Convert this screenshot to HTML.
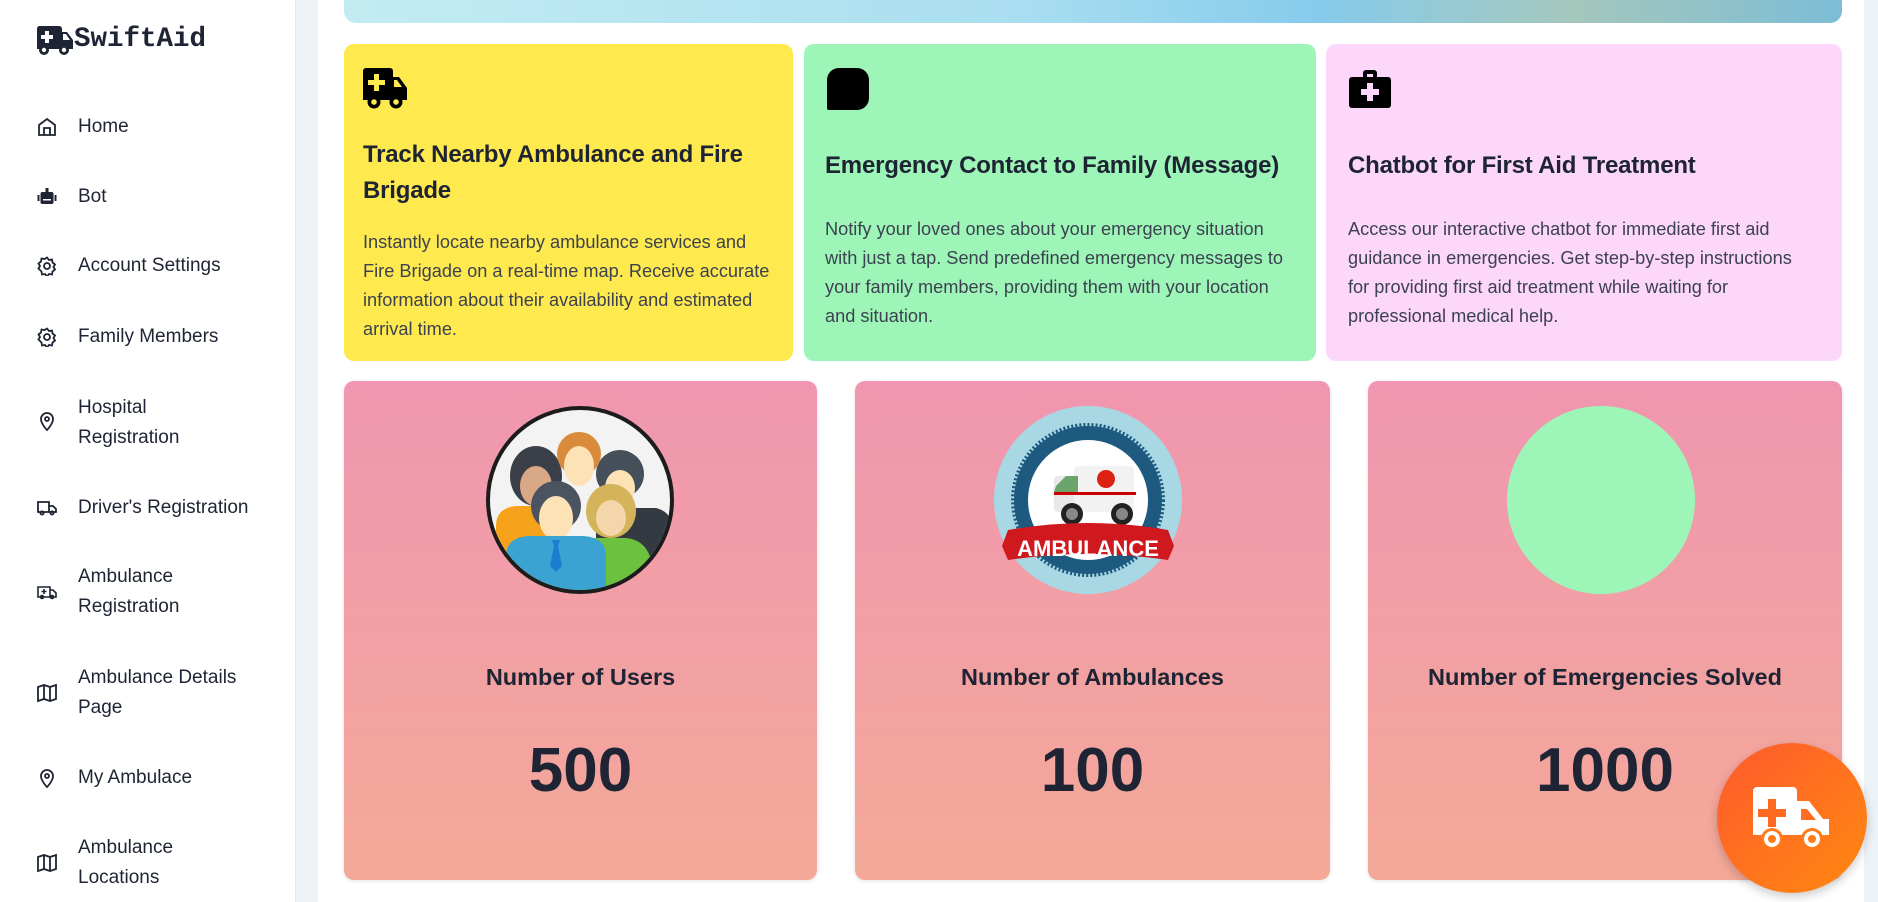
<!DOCTYPE html>
<html><head><meta charset="utf-8"><style>
*{margin:0;padding:0;box-sizing:border-box}
body{width:1878px;height:902px;overflow:hidden;background:#edf2f7;font-family:"Liberation Sans",sans-serif;color:#1e2433;position:relative}
.side{position:absolute;left:0;top:0;width:296px;height:902px;background:#fff;border-right:1px solid #e2e8f0}
.main{position:absolute;left:318px;top:0;width:1546px;height:902px;background:#fff}
.a{position:absolute}
.nav{position:absolute;left:78px;font-size:19px;line-height:30px;color:#1e2433}
.ic{position:absolute;left:37px;width:20px;height:20px}
.card{position:absolute;top:44px;height:317px;border-radius:10px}
.t{position:absolute;font-size:24px;font-weight:bold;line-height:36px;color:#1e2433;letter-spacing:-0.2px}
.b{position:absolute;font-size:18.2px;line-height:29px;color:#3c4250}
.stat{position:absolute;top:381px;height:499px;border-radius:10px;background:linear-gradient(#f096b0,#f4a998);box-shadow:0 1px 4px rgba(0,0,0,.12)}
.lbl{position:absolute;left:0;right:0;top:660px;text-align:center;font-size:23.5px;font-weight:bold;line-height:34px}
.num{position:absolute;left:0;right:0;top:733px;text-align:center;font-size:62px;font-weight:bold;line-height:76px}
</style></head><body>
<div class="side">
<svg class="a" style="left:36px;top:26px" width="38" height="30" viewBox="0 0 38 30"><path d="M3 0h20a3 3 0 0 1 3 3v3h5l6 8v9H1V3a3 3 0 0 1 2-3z" fill="#1e2433"/><path d="M9 5h4v4h4v4h-4v4H9v-4H5V9h4z" fill="#fff"/><path d="M27 8h3l4 6h-7z" fill="#fff"/><circle cx="8" cy="24" r="5" fill="#1e2433"/><circle cx="8" cy="24" r="2.2" fill="#fff"/><circle cx="28" cy="24" r="5" fill="#1e2433"/><circle cx="28" cy="24" r="2.2" fill="#fff"/></svg>
<div class="a" style="left:74px;top:24px;font-family:'Liberation Mono',monospace;font-weight:bold;font-size:27.5px;color:#1e2433">SwiftAid</div>

<svg class="ic" style="top:117px" viewBox="0 0 20 20" fill="none" stroke="#1e2433" stroke-width="1.8"><path d="M2 8l8-6 8 6v10H2z"/><path d="M7 18v-7h6v7"/></svg>
<div class="nav" style="top:112px">Home</div>
<svg class="ic" style="top:187px" viewBox="0 0 20 20"><rect x="3.5" y="5" width="13" height="12" rx="2" fill="#1e2433"/><rect x="8.5" y="1" width="3" height="4" fill="#1e2433"/><rect x="0.5" y="8" width="2" height="6" fill="#1e2433"/><rect x="17.5" y="8" width="2" height="6" fill="#1e2433"/><rect x="6" y="12" width="8" height="1.5" fill="#fff"/></svg>
<div class="nav" style="top:182px">Bot</div>
<svg class="ic" style="top:256px" viewBox="0 0 20 20" fill="none" stroke="#1e2433" stroke-width="1.8"><circle cx="10" cy="10" r="3"/><path d="M10 1.5l2 2.5 3-.5.5 3 2.5 2-1.5 2.5 1.5 2.5-2.5 2-.5 3-3-.5-2 2.5-2-2.5-3 .5-.5-3L1.5 12.5 3 10 1.5 7.5 4 5.5 4.5 2.5l3 .5z"/></svg>
<div class="nav" style="top:251px">Account Settings</div>
<svg class="ic" style="top:327px" viewBox="0 0 20 20" fill="none" stroke="#1e2433" stroke-width="1.8"><circle cx="10" cy="10" r="3"/><path d="M10 1.5l2 2.5 3-.5.5 3 2.5 2-1.5 2.5 1.5 2.5-2.5 2-.5 3-3-.5-2 2.5-2-2.5-3 .5-.5-3L1.5 12.5 3 10 1.5 7.5 4 5.5 4.5 2.5l3 .5z"/></svg>
<div class="nav" style="top:322px">Family Members</div>
<svg class="ic" style="top:411px" viewBox="0 0 20 20" fill="none" stroke="#1e2433" stroke-width="1.8"><path d="M10 19s-6-6-6-11a6 6 0 0 1 12 0c0 5-6 11-6 11z"/><circle cx="10" cy="8" r="2"/></svg>
<div class="nav" style="top:393px">Hospital<br>Registration</div>
<svg class="ic" style="top:498px" viewBox="0 0 20 20" fill="none" stroke="#1e2433" stroke-width="1.8"><path d="M1 4h11v10H1zM12 8h4l3 3v3h-7"/><circle cx="5" cy="15" r="1.6"/><circle cx="15" cy="15" r="1.6"/></svg>
<div class="nav" style="top:493px">Driver's Registration</div>
<svg class="ic" style="top:582px" viewBox="0 0 20 20" fill="none" stroke="#1e2433" stroke-width="1.6"><path d="M1 5h12v10H1zM13 8h3l3 3v4h-6"/><path d="M7 7v5M4.5 9.5h5"/><circle cx="5" cy="15" r="1.5"/><circle cx="15" cy="15" r="1.5"/></svg>
<div class="nav" style="top:562px">Ambulance<br>Registration</div>
<svg class="ic" style="top:683px" viewBox="0 0 20 20" fill="none" stroke="#1e2433" stroke-width="1.8"><path d="M1 4l6-2 6 2 6-2v14l-6 2-6-2-6 2zM7 2v14M13 4v14"/></svg>
<div class="nav" style="top:663px">Ambulance Details<br>Page</div>
<svg class="ic" style="top:768px" viewBox="0 0 20 20" fill="none" stroke="#1e2433" stroke-width="1.8"><path d="M10 19s-6-6-6-11a6 6 0 0 1 12 0c0 5-6 11-6 11z"/><circle cx="10" cy="8" r="2"/></svg>
<div class="nav" style="top:763px">My Ambulace</div>
<svg class="ic" style="top:853px" viewBox="0 0 20 20" fill="none" stroke="#1e2433" stroke-width="1.8"><path d="M1 4l6-2 6 2 6-2v14l-6 2-6-2-6 2zM7 2v14M13 4v14"/></svg>
<div class="nav" style="top:833px">Ambulance<br>Locations</div>
</div>

<div class="main"></div>
<div class="a" style="left:344px;top:0;width:1498px;height:23px;border-radius:0 0 12px 12px;background:linear-gradient(90deg,#c2ecf2 0%,#a9def0 45%,#86cbec 65%,#a4c7bc 82%,#7dbdd6 100%)"></div>

<div class="card" style="left:344px;width:449px;background:#fee94f"></div>
<svg class="a" style="left:363px;top:68px" width="46" height="42" viewBox="0 0 46 42"><path d="M3 0h24a3 3 0 0 1 3 3v6h6l8 11v12H0V3a3 3 0 0 1 3-3z" fill="#000"/><path d="M11 6h5v6h6v5h-6v6h-5v-6H5v-5h6z" fill="#fee94f"/><path d="M31 12h3l5 7h-8z" fill="#fee94f"/><circle cx="11" cy="34" r="6.5" fill="#000"/><circle cx="11" cy="34" r="2.8" fill="#fee94f"/><circle cx="33" cy="34" r="6.5" fill="#000"/><circle cx="33" cy="34" r="2.8" fill="#fee94f"/></svg>
<div class="t" style="left:363px;top:137px">Track Nearby Ambulance and Fire<br>Brigade</div>
<div class="b" style="left:363px;top:228px">Instantly locate nearby ambulance services and<br>Fire Brigade on a real-time map. Receive accurate<br>information about their availability and estimated<br>arrival time.</div>

<div class="card" style="left:804px;width:512px;background:#9ef5b8"></div>
<div class="a" style="left:827px;top:68px;width:42px;height:42px;background:#000;border-radius:12px 12px 12px 2px"></div>
<div class="t" style="left:825px;top:148px">Emergency Contact to Family (Message)</div>
<div class="b" style="left:825px;top:215px">Notify your loved ones about your emergency situation<br>with just a tap. Send predefined emergency messages to<br>your family members, providing them with your location<br>and situation.</div>

<div class="card" style="left:1326px;width:516px;background:#fdd6fc"></div>
<svg class="a" style="left:1349px;top:68px" width="42" height="40" viewBox="0 0 42 40"><path d="M14 9V5a3 3 0 0 1 3-3h8a3 3 0 0 1 3 3v4h-4V6h-6v3z" fill="#000"/><rect x="0" y="9" width="42" height="31" rx="3" fill="#000"/><path d="M18 15h6v6h6v6h-6v6h-6v-6h-6v-6h6z" fill="#fdd6fc"/></svg>
<div class="t" style="left:1348px;top:148px">Chatbot for First Aid Treatment</div>
<div class="b" style="left:1348px;top:215px">Access our interactive chatbot for immediate first aid<br>guidance in emergencies. Get step-by-step instructions<br>for providing first aid treatment while waiting for<br>professional medical help.</div>

<div class="stat" style="left:344px;width:473px">
<svg class="a" style="left:142px;top:25px" width="188" height="188" viewBox="0 0 188 188">
<defs><clipPath id="c1"><circle cx="94" cy="94" r="90"/></clipPath></defs>
<circle cx="94" cy="94" r="92" fill="#f3f3f3" stroke="#1c1c1c" stroke-width="4"/>
<g clip-path="url(#c1)">
<ellipse cx="50" cy="70" rx="26" ry="30" fill="#3b4048"/><ellipse cx="50" cy="80" rx="16" ry="20" fill="#d9a887"/><path d="M10 190V120q0-18 20-20h40v90z" fill="#f7a21b"/>
<ellipse cx="134" cy="68" rx="24" ry="24" fill="#45505a"/><ellipse cx="134" cy="82" rx="15" ry="18" fill="#fde2b6"/><path d="M110 190v-70q0-16 20-18h40q16 4 16 20v68z" fill="#333a42"/>
<ellipse cx="93" cy="48" rx="22" ry="22" fill="#d98a3a"/><ellipse cx="93" cy="60" rx="15" ry="20" fill="#fde2b6"/>
<ellipse cx="125" cy="105" rx="25" ry="27" fill="#d4b35a"/><ellipse cx="125" cy="112" rx="15" ry="18" fill="#f3d6a9"/><path d="M90 190v-40q0-16 20-18h30q20 2 25 22v36z" fill="#6cc13e"/>
<ellipse cx="70" cy="100" rx="25" ry="25" fill="#4b5360"/><ellipse cx="70" cy="112" rx="17" ry="22" fill="#fde2b6"/><path d="M20 190v-40q0-18 22-20h56q22 2 22 20v40z" fill="#3aa3d1"/><path d="M66 134h8l-2 6 4 20-6 6-6-6 4-20z" fill="#1a7fd0"/>
</g></svg>
<div class="lbl" style="top:279px">Number of Users</div>
<div class="num" style="top:352px">500</div>
</div>

<div class="stat" style="left:855px;width:475px">
<svg class="a" style="left:139px;top:25px" width="188" height="188" viewBox="0 0 188 188">
<circle cx="94" cy="94" r="94" fill="#a8d8e3"/>
<circle cx="94" cy="94" r="74" fill="#1e5a80" stroke="#1e5a80" stroke-width="6" stroke-dasharray="2 2"/>
<circle cx="94" cy="94" r="60" fill="#fff"/>
<rect x="60" y="70" width="30" height="36" rx="4" fill="#e8e8e8"/><rect x="80" y="60" width="60" height="46" rx="3" fill="#f2f2f2"/><path d="M62 80l10-10h12v16H60z" fill="#6ba56b"/><rect x="60" y="86" width="82" height="3" fill="#c00"/><circle cx="112" cy="73" r="9" fill="#d21"/>
<circle cx="78" cy="108" r="11" fill="#222"/><circle cx="78" cy="108" r="6" fill="#888"/><circle cx="128" cy="108" r="11" fill="#222"/><circle cx="128" cy="108" r="6" fill="#888"/>
<path d="M8 140l6-16q80-14 160 0l6 16-6 14q-80-12-160 0z" fill="#d0181f"/>
<text x="94" y="150" text-anchor="middle" font-family="Liberation Sans" font-weight="bold" font-size="22" fill="#fff">AMBULANCE</text>
</svg>
<div class="lbl" style="top:279px">Number of Ambulances</div>
<div class="num" style="top:352px">100</div>
</div>

<div class="stat" style="left:1368px;width:474px">
<div class="a" style="left:139px;top:25px;width:188px;height:188px;border-radius:50%;background:#9ef5b8"></div>
<div class="lbl" style="top:279px">Number of Emergencies Solved</div>
<div class="num" style="top:352px">1000</div>
</div>

<div class="a" style="left:1717px;top:743px;width:150px;height:150px;border-radius:50%;background:linear-gradient(135deg,#ff5a2d,#ff8910);box-shadow:0 4px 10px rgba(0,0,0,.2)"></div>
<svg class="a" style="left:1753px;top:787px" width="80" height="64" viewBox="0 0 80 64"><path d="M4 0h36a4 4 0 0 1 4 4v10h12l14 18h6v16H0V4a4 4 0 0 1 4-4z" fill="#fff"/><path d="M15 12h8v10h10v8H23v10h-8V30H5v-8h10z" fill="#ff6a22"/><path d="M48 22h6l9 11H48z" fill="#ff6e20"/><circle cx="19" cy="52" r="11" fill="#ff7a1a"/><circle cx="19" cy="52" r="8" fill="#fff"/><circle cx="19" cy="52" r="4" fill="#ff7a1a"/><circle cx="59" cy="52" r="11" fill="#ff7a1a"/><circle cx="59" cy="52" r="8" fill="#fff"/><circle cx="59" cy="52" r="4" fill="#ff7a1a"/></svg>
</body></html>
